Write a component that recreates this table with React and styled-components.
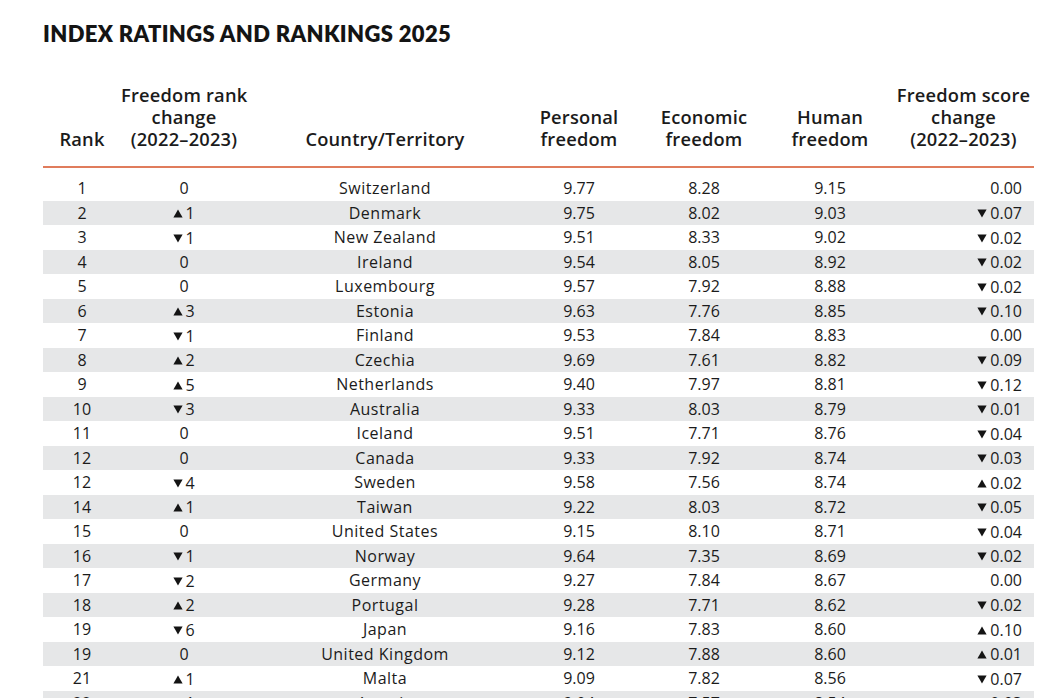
import React from "react";
import styled, { createGlobalStyle } from "styled-components";

const Global = createGlobalStyle`
  html, body { margin: 0; padding: 0; background: #ffffff; }
  body { font-family: "Open Sans", "Liberation Sans", sans-serif; color: #1b1b1b; }
`;

const COLS = "78px 126px 276px 112px 138px 114px 147px";

const Page = styled.div`
  width: 1060px;
  height: 698px;
  overflow: hidden;
  padding: 21px 26px 0 43px;
  box-sizing: border-box;
`;

const Title = styled.h1`
  margin: 0;
  font-family: "Lato", "Liberation Sans", sans-serif;
  font-size: 22px;
  line-height: 26px;
  font-weight: 800;
  letter-spacing: 0.35px;
  color: #141414;
`;

const Table = styled.div`
  margin-top: 37px;
  width: 991px;
`;

const HeaderRow = styled.div`
  display: grid;
  grid-template-columns: ${COLS};
  align-items: end;
  padding-bottom: 16px;
  border-bottom: 2.5px solid #e07c5c;
`;

const HeadCell = styled.div`
  font-size: 18.3px;
  line-height: 22px;
  font-weight: 600;
  letter-spacing: 0.2px;
  text-align: center;
  white-space: nowrap;
  padding-left: ${(p) => p.$pl || 0}px;
`;

const Body = styled.div`
  padding-top: 8px;
`;

const Row = styled.div`
  display: grid;
  grid-template-columns: ${COLS};
  align-items: center;
  height: 24.5px;
  background: ${(p) => (p.$striped ? "#e6e7e8" : "transparent")};
`;

const Cell = styled.div`
  font-size: 16px;
  line-height: 20px;
  text-align: ${(p) => p.$align || "center"};
  letter-spacing: ${(p) => p.$ls || 0}px;
  padding-right: ${(p) => p.$pr || 0}px;
  white-space: nowrap;
`;

const Change = styled.span`
  display: inline-flex;
  align-items: center;
  gap: ${(p) => p.$gap}px;
`;

const TriSvg = styled.svg`
  display: block;
  margin-top: 1px;
`;

function Tri({ dir }) {
  return (
    <TriSvg width="10" height="9" viewBox="0 0 10 9">
      {dir === "up" ? (
        <polygon points="5,0.5 9.6,8.5 0.4,8.5" fill="#141414" />
      ) : (
        <polygon points="0.4,0.5 9.6,0.5 5,8.5" fill="#141414" />
      )}
    </TriSvg>
  );
}

function ChangeValue({ v, gap }) {
  if (v[0] === "+" || v[0] === "-") {
    return (
      <Change $gap={gap}>
        <Tri dir={v[0] === "+" ? "up" : "down"} />
        <span>{v.slice(1)}</span>
      </Change>
    );
  }
  return <span>{v}</span>;
}

const rows = [
  ["1", "0", "Switzerland", "9.77", "8.28", "9.15", "0.00"],
  ["2", "+1", "Denmark", "9.75", "8.02", "9.03", "-0.07"],
  ["3", "-1", "New Zealand", "9.51", "8.33", "9.02", "-0.02"],
  ["4", "0", "Ireland", "9.54", "8.05", "8.92", "-0.02"],
  ["5", "0", "Luxembourg", "9.57", "7.92", "8.88", "-0.02"],
  ["6", "+3", "Estonia", "9.63", "7.76", "8.85", "-0.10"],
  ["7", "-1", "Finland", "9.53", "7.84", "8.83", "0.00"],
  ["8", "+2", "Czechia", "9.69", "7.61", "8.82", "-0.09"],
  ["9", "+5", "Netherlands", "9.40", "7.97", "8.81", "-0.12"],
  ["10", "-3", "Australia", "9.33", "8.03", "8.79", "-0.01"],
  ["11", "0", "Iceland", "9.51", "7.71", "8.76", "-0.04"],
  ["12", "0", "Canada", "9.33", "7.92", "8.74", "-0.03"],
  ["12", "-4", "Sweden", "9.58", "7.56", "8.74", "+0.02"],
  ["14", "+1", "Taiwan", "9.22", "8.03", "8.72", "-0.05"],
  ["15", "0", "United States", "9.15", "8.10", "8.71", "-0.04"],
  ["16", "-1", "Norway", "9.64", "7.35", "8.69", "-0.02"],
  ["17", "-2", "Germany", "9.27", "7.84", "8.67", "0.00"],
  ["18", "+2", "Portugal", "9.28", "7.71", "8.62", "-0.02"],
  ["19", "-6", "Japan", "9.16", "7.83", "8.60", "+0.10"],
  ["19", "0", "United Kingdom", "9.12", "7.88", "8.60", "+0.01"],
  ["21", "+1", "Malta", "9.09", "7.82", "8.56", "-0.07"],
  ["22", "+1", "Austria", "9.04", "7.57", "8.54", "+0.03"],
];

export default function App() {
  return (
    <>
      <Global />
      <Page>
        <Title>INDEX RATINGS AND RANKINGS 2025</Title>
        <Table>
          <HeaderRow>
            <HeadCell>Rank</HeadCell>
            <HeadCell>
              Freedom rank
              <br />
              change
              <br />
              (2022–2023)
            </HeadCell>
            <HeadCell>Country/Territory</HeadCell>
            <HeadCell>
              Personal
              <br />
              freedom
            </HeadCell>
            <HeadCell>
              Economic
              <br />
              freedom
            </HeadCell>
            <HeadCell>
              Human
              <br />
              freedom
            </HeadCell>
            <HeadCell $pl={6}>
              Freedom score
              <br />
              change
              <br />
              (2022–2023)
            </HeadCell>
          </HeaderRow>
          <Body>
            {rows.map((r, i) => (
              <Row key={i} $striped={i % 2 === 1}>
                <Cell>{r[0]}</Cell>
                <Cell>
                  <ChangeValue v={r[1]} gap={2} />
                </Cell>
                <Cell $ls={0.5}>{r[2]}</Cell>
                <Cell>{r[3]}</Cell>
                <Cell>{r[4]}</Cell>
                <Cell>{r[5]}</Cell>
                <Cell $align="right" $pr={12}>
                  <ChangeValue v={r[6]} gap={3} />
                </Cell>
              </Row>
            ))}
          </Body>
        </Table>
      </Page>
    </>
  );
}
